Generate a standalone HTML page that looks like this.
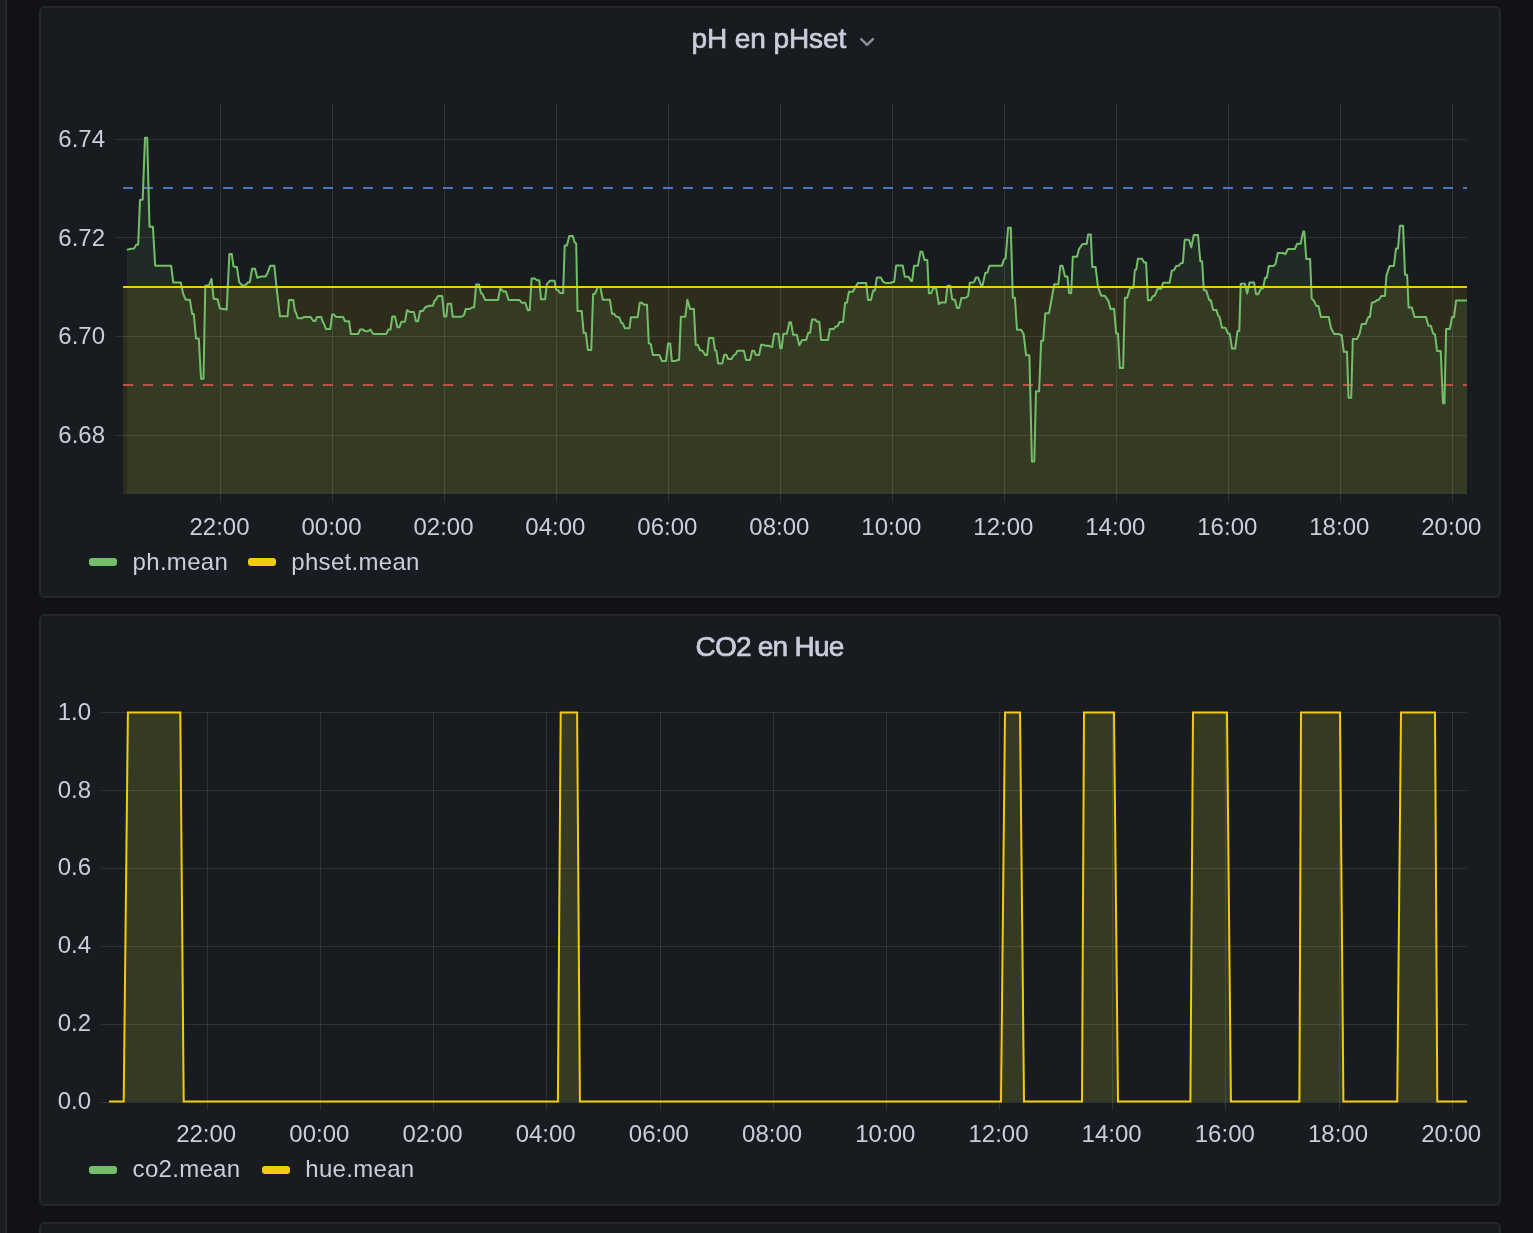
<!DOCTYPE html>
<html><head><meta charset="utf-8"><title>Grafana</title>
<style>
html,body{margin:0;padding:0;}
body{width:1533px;height:1233px;overflow:hidden;background:#111217;position:relative;font-family:"Liberation Sans",sans-serif;}
.side{position:absolute;left:0;top:0;width:5px;height:1233px;background:#181b1f;border-right:2px solid #25282d;}
.panel{position:absolute;left:39px;width:1462px;box-sizing:border-box;border:2px solid #25272c;border-radius:6px;background:#181b1f;}
</style></head><body>
<div class="side"></div>
<div class="panel" style="top:6px;height:592px"></div>
<div class="panel" style="top:614px;height:592px"></div>
<div class="panel" style="top:1222px;height:600px"></div>
<svg width="1533" height="1233" viewBox="0 0 1533 1233" style="position:absolute;left:0;top:0;will-change:transform">
<g stroke="rgba(240,250,255,0.11)" stroke-width="1" shape-rendering="crispEdges">
<line x1="115" y1="139.50" x2="1467" y2="139.50"/><line x1="115" y1="237.50" x2="1467" y2="237.50"/><line x1="115" y1="336.50" x2="1467" y2="336.50"/><line x1="115" y1="435.50" x2="1467" y2="435.50"/>
<line x1="220.5" y1="104" x2="220.5" y2="502"/><line x1="332.5" y1="104" x2="332.5" y2="502"/><line x1="444.5" y1="104" x2="444.5" y2="502"/><line x1="556.5" y1="104" x2="556.5" y2="502"/><line x1="668.5" y1="104" x2="668.5" y2="502"/><line x1="780.5" y1="104" x2="780.5" y2="502"/><line x1="892.5" y1="104" x2="892.5" y2="502"/><line x1="1004.5" y1="104" x2="1004.5" y2="502"/><line x1="1116.5" y1="104" x2="1116.5" y2="502"/><line x1="1228.5" y1="104" x2="1228.5" y2="502"/><line x1="1340.5" y1="104" x2="1340.5" y2="502"/><line x1="1452.5" y1="104" x2="1452.5" y2="502"/>
<line x1="101" y1="712.50" x2="1467" y2="712.50"/><line x1="101" y1="790.50" x2="1467" y2="790.50"/><line x1="101" y1="868.50" x2="1467" y2="868.50"/><line x1="101" y1="946.50" x2="1467" y2="946.50"/><line x1="101" y1="1024.50" x2="1467" y2="1024.50"/><line x1="101" y1="1102.50" x2="1467" y2="1102.50"/>
<line x1="207.5" y1="712" x2="207.5" y2="1110"/><line x1="320.5" y1="712" x2="320.5" y2="1110"/><line x1="433.5" y1="712" x2="433.5" y2="1110"/><line x1="546.5" y1="712" x2="546.5" y2="1110"/><line x1="660.5" y1="712" x2="660.5" y2="1110"/><line x1="773.5" y1="712" x2="773.5" y2="1110"/><line x1="886.5" y1="712" x2="886.5" y2="1110"/><line x1="999.5" y1="712" x2="999.5" y2="1110"/><line x1="1112.5" y1="712" x2="1112.5" y2="1110"/><line x1="1225.5" y1="712" x2="1225.5" y2="1110"/><line x1="1339.5" y1="712" x2="1339.5" y2="1110"/><line x1="1452.5" y1="712" x2="1452.5" y2="1110"/>
</g>
<!-- panel1 fills -->
<rect x="123" y="287" width="1344" height="207" fill="rgba(242,204,12,0.1)"/>
<polygon points="127.0,494.0 127.0,250.0 127.3,249.8 130.2,248.9 134.1,248.5 136.3,244.8 138.2,244.4 140.0,199.9 142.7,199.4 145.0,137.7 147.2,137.7 149.5,226.7 152.9,226.7 155.2,265.7 171.1,265.7 173.3,282.5 180.8,282.5 183.1,293.6 185.8,299.8 189.9,299.8 192.2,314.0 193.8,314.0 196.0,338.6 198.8,338.6 201.0,378.7 203.5,378.7 205.3,285.7 209.0,285.2 211.5,278.9 213.7,298.8 217.6,299.3 219.9,308.4 226.7,309.5 229.4,253.9 231.7,253.9 233.5,266.4 236.9,267.1 239.2,282.3 242.6,285.7 245.3,285.2 248.2,282.3 249.8,282.3 252.1,268.7 255.0,268.7 257.3,277.7 260.3,276.6 265.3,276.6 267.5,273.2 270.3,265.7 274.3,265.7 276.6,288.0 280.0,316.3 287.5,316.3 289.1,299.9 293.3,299.9 294.9,311.3 296.0,312.7 297.7,318.2 302.2,318.2 304.3,316.9 310.5,316.9 313.3,321.0 315.3,321.0 317.0,316.9 321.1,316.9 322.9,322.1 323.9,323.5 326.0,329.0 330.2,329.0 332.2,314.4 333.9,314.4 336.0,316.9 343.2,316.9 345.0,321.3 349.1,321.3 350.9,334.1 358.1,334.1 360.1,329.5 362.9,329.5 365.0,331.3 367.7,331.3 370.5,329.5 373.2,334.1 386.3,334.1 388.4,329.5 390.5,329.5 392.3,316.6 395.0,316.6 397.4,327.2 399.4,327.2 401.5,321.7 405.0,321.7 407.0,310.2 409.8,312.0 413.9,312.0 416.0,321.3 418.0,321.3 420.1,311.1 422.9,311.1 425.0,307.5 427.0,306.5 429.5,305.8 432.8,305.8 434.6,300.6 436.0,299.6 438.0,295.9 442.2,295.9 444.2,316.6 446.3,316.6 447.7,303.8 451.1,303.8 452.8,316.8 461.0,316.8 463.8,315.4 465.9,308.9 470.0,308.9 472.1,307.5 474.1,307.5 476.2,284.5 479.0,284.5 481.0,293.3 482.4,293.8 485.2,300.0 498.0,300.0 500.3,288.2 503.1,291.4 505.8,291.4 508.6,300.0 519.6,300.0 521.7,302.7 525.1,302.7 527.9,310.3 529.7,310.3 531.6,278.6 534.8,278.6 536.9,280.3 539.3,280.3 541.0,299.3 545.1,299.3 546.8,284.1 550.0,280.7 554.5,280.7 556.2,289.6 558.2,290.3 560.3,293.1 563.1,293.1 564.7,245.5 566.9,245.5 569.3,235.9 572.7,235.9 574.8,242.7 576.2,243.4 577.5,311.0 581.7,311.0 583.7,333.1 585.8,333.1 587.9,350.0 591.3,350.0 593.1,294.2 595.0,293.8 597.8,286.9 600.3,286.9 602.8,299.7 609.9,299.7 612.0,313.8 614.1,313.8 616.1,316.5 619.1,317.2 621.2,322.7 622.6,323.1 624.9,328.2 629.5,328.2 630.9,317.2 637.7,317.2 639.8,302.7 641.9,302.7 644.0,304.8 647.0,304.8 648.8,343.4 650.8,344.1 652.9,355.1 659.4,355.1 661.9,360.9 666.0,360.9 668.1,343.4 670.2,343.4 671.8,360.9 675.7,360.9 677.7,359.9 679.1,359.9 680.9,316.8 685.3,316.8 687.4,299.7 690.1,308.9 693.9,308.9 695.7,344.8 697.7,344.8 700.2,350.3 702.5,350.7 705.3,355.1 707.1,355.1 709.0,337.9 713.2,337.9 715.0,350.3 716.3,350.7 718.1,363.4 722.3,363.4 724.2,354.8 726.4,354.8 728.1,359.0 731.5,359.0 733.6,355.4 735.6,354.4 737.4,350.7 743.9,350.7 746.0,359.9 750.1,359.9 752.2,350.7 754.0,350.7 755.9,355.1 759.1,355.1 761.1,344.8 763.6,344.8 765.3,345.7 768.7,345.7 770.8,346.8 772.2,346.8 774.2,333.7 778.4,333.7 780.2,348.2 781.7,348.2 783.4,333.7 786.9,333.7 789.4,322.3 791.0,322.3 793.1,334.7 796.8,334.7 799.3,345.2 802.1,340.0 806.2,340.0 808.3,332.8 810.1,332.8 812.0,319.5 815.2,319.5 817.2,321.8 819.3,321.8 821.1,340.0 828.0,340.0 829.9,328.9 833.8,328.9 835.8,326.4 837.6,326.2 839.6,322.0 843.1,322.0 845.1,302.7 846.9,302.7 848.9,291.7 852.8,291.7 855.1,287.6 857.9,283.1 866.2,283.1 868.0,300.0 871.0,300.0 873.1,290.6 874.9,290.6 876.8,277.6 880.9,277.6 883.1,281.8 886.2,283.1 890.3,283.1 892.4,282.0 894.2,282.0 896.1,265.5 902.7,265.5 904.8,276.8 908.5,276.8 911.0,280.9 912.1,280.9 914.0,265.8 917.9,265.8 920.4,251.7 922.3,251.7 924.5,260.0 927.3,260.0 928.9,293.3 931.0,293.3 933.3,288.2 936.1,288.2 938.8,304.1 941.3,302.4 945.7,302.4 947.5,285.7 950.2,285.7 952.2,299.4 954.9,299.8 957.0,308.1 959.1,308.1 961.5,298.1 965.7,297.7 968.2,295.7 969.8,282.8 974.0,282.2 976.0,277.5 978.1,277.5 981.2,285.3 982.6,285.3 985.3,272.9 987.4,272.5 989.5,265.7 1001.9,265.7 1003.9,259.5 1005.6,258.4 1008.1,227.8 1010.8,227.8 1012.8,297.7 1014.9,297.7 1017.0,329.8 1021.1,329.8 1023.6,333.9 1026.1,355.2 1029.4,355.2 1031.9,461.5 1034.3,461.5 1036.0,391.2 1039.1,391.2 1041.2,340.7 1043.2,340.7 1045.3,313.2 1049.0,313.2 1051.5,299.8 1054.2,284.3 1058.3,284.3 1060.4,265.7 1062.5,265.7 1065.0,276.6 1067.4,276.6 1069.1,293.2 1071.2,293.2 1072.8,256.8 1077.0,256.8 1079.0,249.1 1082.5,244.0 1086.7,244.0 1088.1,234.6 1090.8,234.6 1092.3,267.1 1095.6,267.1 1098.0,287.0 1101.2,295.7 1104.7,295.7 1108.4,300.8 1110.5,309.1 1114.1,308.8 1116.2,333.6 1118.0,333.6 1119.9,368.0 1123.1,368.0 1124.9,297.7 1127.2,297.7 1130.0,288.1 1133.4,288.1 1134.8,270.1 1136.2,269.5 1137.9,258.8 1142.0,258.8 1144.2,262.6 1146.1,262.6 1147.9,300.2 1150.7,300.2 1152.7,296.3 1154.8,295.7 1157.6,288.8 1161.3,288.8 1163.1,282.8 1169.6,282.8 1171.8,270.8 1174.1,270.1 1176.2,266.0 1178.9,265.7 1181.0,263.0 1182.8,263.0 1184.7,239.8 1188.9,239.8 1191.3,247.4 1193.8,235.0 1198.0,235.0 1200.3,261.2 1202.1,261.2 1203.8,290.1 1206.2,290.6 1209.3,300.2 1210.9,300.2 1213.1,309.9 1216.4,309.9 1218.2,315.6 1219.6,317.0 1222.0,327.8 1225.5,327.8 1227.9,333.3 1229.7,333.8 1232.0,348.5 1235.2,348.5 1237.5,331.1 1239.3,331.1 1240.7,283.7 1244.8,283.7 1247.2,293.6 1249.5,282.6 1254.1,282.6 1256.1,294.3 1258.2,294.3 1261.0,288.4 1263.0,288.4 1265.1,277.7 1266.9,277.7 1268.8,266.0 1273.4,266.0 1275.5,264.0 1277.8,253.0 1282.9,253.0 1285.3,254.2 1288.0,249.0 1294.8,249.0 1297.1,243.8 1300.6,243.8 1303.2,231.6 1304.3,231.6 1306.3,259.0 1310.1,259.0 1311.7,298.8 1313.7,300.4 1316.4,305.9 1318.5,305.9 1320.9,317.0 1328.8,317.0 1331.1,328.6 1334.3,333.9 1338.3,333.9 1341.7,335.2 1343.8,351.8 1347.0,351.8 1348.5,397.7 1351.2,397.7 1352.8,339.1 1356.9,339.1 1359.6,333.9 1361.7,324.1 1365.5,324.1 1368.3,317.0 1369.9,317.0 1371.8,302.8 1375.0,301.7 1377.0,300.1 1378.6,300.1 1381.3,296.0 1384.9,296.0 1386.5,275.1 1389.7,265.9 1393.9,265.9 1396.0,248.5 1398.0,248.5 1399.9,225.8 1403.1,225.8 1405.0,274.8 1407.1,274.8 1408.6,307.5 1411.8,307.5 1414.5,317.0 1426.0,317.0 1428.4,325.7 1430.8,325.7 1433.2,333.6 1435.0,334.4 1437.1,351.0 1440.7,351.0 1443.0,403.2 1444.5,403.2 1446.1,328.9 1449.8,328.9 1452.1,317.0 1454.0,317.0 1456.1,300.4 1467.0,300.4 1467.0,494.0" fill="rgba(115,191,105,0.1)"/>
<line x1="123" y1="188" x2="1467" y2="188" stroke="#4b79be" stroke-width="2" stroke-dasharray="10 10"/>
<line x1="123" y1="385" x2="1467" y2="385" stroke="#b85445" stroke-width="2" stroke-dasharray="10 10"/>
<polyline points="127.0,250.0 127.3,249.8 130.2,248.9 134.1,248.5 136.3,244.8 138.2,244.4 140.0,199.9 142.7,199.4 145.0,137.7 147.2,137.7 149.5,226.7 152.9,226.7 155.2,265.7 171.1,265.7 173.3,282.5 180.8,282.5 183.1,293.6 185.8,299.8 189.9,299.8 192.2,314.0 193.8,314.0 196.0,338.6 198.8,338.6 201.0,378.7 203.5,378.7 205.3,285.7 209.0,285.2 211.5,278.9 213.7,298.8 217.6,299.3 219.9,308.4 226.7,309.5 229.4,253.9 231.7,253.9 233.5,266.4 236.9,267.1 239.2,282.3 242.6,285.7 245.3,285.2 248.2,282.3 249.8,282.3 252.1,268.7 255.0,268.7 257.3,277.7 260.3,276.6 265.3,276.6 267.5,273.2 270.3,265.7 274.3,265.7 276.6,288.0 280.0,316.3 287.5,316.3 289.1,299.9 293.3,299.9 294.9,311.3 296.0,312.7 297.7,318.2 302.2,318.2 304.3,316.9 310.5,316.9 313.3,321.0 315.3,321.0 317.0,316.9 321.1,316.9 322.9,322.1 323.9,323.5 326.0,329.0 330.2,329.0 332.2,314.4 333.9,314.4 336.0,316.9 343.2,316.9 345.0,321.3 349.1,321.3 350.9,334.1 358.1,334.1 360.1,329.5 362.9,329.5 365.0,331.3 367.7,331.3 370.5,329.5 373.2,334.1 386.3,334.1 388.4,329.5 390.5,329.5 392.3,316.6 395.0,316.6 397.4,327.2 399.4,327.2 401.5,321.7 405.0,321.7 407.0,310.2 409.8,312.0 413.9,312.0 416.0,321.3 418.0,321.3 420.1,311.1 422.9,311.1 425.0,307.5 427.0,306.5 429.5,305.8 432.8,305.8 434.6,300.6 436.0,299.6 438.0,295.9 442.2,295.9 444.2,316.6 446.3,316.6 447.7,303.8 451.1,303.8 452.8,316.8 461.0,316.8 463.8,315.4 465.9,308.9 470.0,308.9 472.1,307.5 474.1,307.5 476.2,284.5 479.0,284.5 481.0,293.3 482.4,293.8 485.2,300.0 498.0,300.0 500.3,288.2 503.1,291.4 505.8,291.4 508.6,300.0 519.6,300.0 521.7,302.7 525.1,302.7 527.9,310.3 529.7,310.3 531.6,278.6 534.8,278.6 536.9,280.3 539.3,280.3 541.0,299.3 545.1,299.3 546.8,284.1 550.0,280.7 554.5,280.7 556.2,289.6 558.2,290.3 560.3,293.1 563.1,293.1 564.7,245.5 566.9,245.5 569.3,235.9 572.7,235.9 574.8,242.7 576.2,243.4 577.5,311.0 581.7,311.0 583.7,333.1 585.8,333.1 587.9,350.0 591.3,350.0 593.1,294.2 595.0,293.8 597.8,286.9 600.3,286.9 602.8,299.7 609.9,299.7 612.0,313.8 614.1,313.8 616.1,316.5 619.1,317.2 621.2,322.7 622.6,323.1 624.9,328.2 629.5,328.2 630.9,317.2 637.7,317.2 639.8,302.7 641.9,302.7 644.0,304.8 647.0,304.8 648.8,343.4 650.8,344.1 652.9,355.1 659.4,355.1 661.9,360.9 666.0,360.9 668.1,343.4 670.2,343.4 671.8,360.9 675.7,360.9 677.7,359.9 679.1,359.9 680.9,316.8 685.3,316.8 687.4,299.7 690.1,308.9 693.9,308.9 695.7,344.8 697.7,344.8 700.2,350.3 702.5,350.7 705.3,355.1 707.1,355.1 709.0,337.9 713.2,337.9 715.0,350.3 716.3,350.7 718.1,363.4 722.3,363.4 724.2,354.8 726.4,354.8 728.1,359.0 731.5,359.0 733.6,355.4 735.6,354.4 737.4,350.7 743.9,350.7 746.0,359.9 750.1,359.9 752.2,350.7 754.0,350.7 755.9,355.1 759.1,355.1 761.1,344.8 763.6,344.8 765.3,345.7 768.7,345.7 770.8,346.8 772.2,346.8 774.2,333.7 778.4,333.7 780.2,348.2 781.7,348.2 783.4,333.7 786.9,333.7 789.4,322.3 791.0,322.3 793.1,334.7 796.8,334.7 799.3,345.2 802.1,340.0 806.2,340.0 808.3,332.8 810.1,332.8 812.0,319.5 815.2,319.5 817.2,321.8 819.3,321.8 821.1,340.0 828.0,340.0 829.9,328.9 833.8,328.9 835.8,326.4 837.6,326.2 839.6,322.0 843.1,322.0 845.1,302.7 846.9,302.7 848.9,291.7 852.8,291.7 855.1,287.6 857.9,283.1 866.2,283.1 868.0,300.0 871.0,300.0 873.1,290.6 874.9,290.6 876.8,277.6 880.9,277.6 883.1,281.8 886.2,283.1 890.3,283.1 892.4,282.0 894.2,282.0 896.1,265.5 902.7,265.5 904.8,276.8 908.5,276.8 911.0,280.9 912.1,280.9 914.0,265.8 917.9,265.8 920.4,251.7 922.3,251.7 924.5,260.0 927.3,260.0 928.9,293.3 931.0,293.3 933.3,288.2 936.1,288.2 938.8,304.1 941.3,302.4 945.7,302.4 947.5,285.7 950.2,285.7 952.2,299.4 954.9,299.8 957.0,308.1 959.1,308.1 961.5,298.1 965.7,297.7 968.2,295.7 969.8,282.8 974.0,282.2 976.0,277.5 978.1,277.5 981.2,285.3 982.6,285.3 985.3,272.9 987.4,272.5 989.5,265.7 1001.9,265.7 1003.9,259.5 1005.6,258.4 1008.1,227.8 1010.8,227.8 1012.8,297.7 1014.9,297.7 1017.0,329.8 1021.1,329.8 1023.6,333.9 1026.1,355.2 1029.4,355.2 1031.9,461.5 1034.3,461.5 1036.0,391.2 1039.1,391.2 1041.2,340.7 1043.2,340.7 1045.3,313.2 1049.0,313.2 1051.5,299.8 1054.2,284.3 1058.3,284.3 1060.4,265.7 1062.5,265.7 1065.0,276.6 1067.4,276.6 1069.1,293.2 1071.2,293.2 1072.8,256.8 1077.0,256.8 1079.0,249.1 1082.5,244.0 1086.7,244.0 1088.1,234.6 1090.8,234.6 1092.3,267.1 1095.6,267.1 1098.0,287.0 1101.2,295.7 1104.7,295.7 1108.4,300.8 1110.5,309.1 1114.1,308.8 1116.2,333.6 1118.0,333.6 1119.9,368.0 1123.1,368.0 1124.9,297.7 1127.2,297.7 1130.0,288.1 1133.4,288.1 1134.8,270.1 1136.2,269.5 1137.9,258.8 1142.0,258.8 1144.2,262.6 1146.1,262.6 1147.9,300.2 1150.7,300.2 1152.7,296.3 1154.8,295.7 1157.6,288.8 1161.3,288.8 1163.1,282.8 1169.6,282.8 1171.8,270.8 1174.1,270.1 1176.2,266.0 1178.9,265.7 1181.0,263.0 1182.8,263.0 1184.7,239.8 1188.9,239.8 1191.3,247.4 1193.8,235.0 1198.0,235.0 1200.3,261.2 1202.1,261.2 1203.8,290.1 1206.2,290.6 1209.3,300.2 1210.9,300.2 1213.1,309.9 1216.4,309.9 1218.2,315.6 1219.6,317.0 1222.0,327.8 1225.5,327.8 1227.9,333.3 1229.7,333.8 1232.0,348.5 1235.2,348.5 1237.5,331.1 1239.3,331.1 1240.7,283.7 1244.8,283.7 1247.2,293.6 1249.5,282.6 1254.1,282.6 1256.1,294.3 1258.2,294.3 1261.0,288.4 1263.0,288.4 1265.1,277.7 1266.9,277.7 1268.8,266.0 1273.4,266.0 1275.5,264.0 1277.8,253.0 1282.9,253.0 1285.3,254.2 1288.0,249.0 1294.8,249.0 1297.1,243.8 1300.6,243.8 1303.2,231.6 1304.3,231.6 1306.3,259.0 1310.1,259.0 1311.7,298.8 1313.7,300.4 1316.4,305.9 1318.5,305.9 1320.9,317.0 1328.8,317.0 1331.1,328.6 1334.3,333.9 1338.3,333.9 1341.7,335.2 1343.8,351.8 1347.0,351.8 1348.5,397.7 1351.2,397.7 1352.8,339.1 1356.9,339.1 1359.6,333.9 1361.7,324.1 1365.5,324.1 1368.3,317.0 1369.9,317.0 1371.8,302.8 1375.0,301.7 1377.0,300.1 1378.6,300.1 1381.3,296.0 1384.9,296.0 1386.5,275.1 1389.7,265.9 1393.9,265.9 1396.0,248.5 1398.0,248.5 1399.9,225.8 1403.1,225.8 1405.0,274.8 1407.1,274.8 1408.6,307.5 1411.8,307.5 1414.5,317.0 1426.0,317.0 1428.4,325.7 1430.8,325.7 1433.2,333.6 1435.0,334.4 1437.1,351.0 1440.7,351.0 1443.0,403.2 1444.5,403.2 1446.1,328.9 1449.8,328.9 1452.1,317.0 1454.0,317.0 1456.1,300.4 1467.0,300.4" fill="none" stroke="#73bf69" stroke-width="2" stroke-linejoin="round"/>
<line x1="123" y1="287" x2="1467" y2="287" stroke="#f2cc0c" stroke-width="2"/>
<!-- panel2 -->
<polygon points="109.0,1101.5 123.7,1101.5 127.9,712.5 180.3,712.5 183.7,1101.5 557.9,1101.5 560.7,712.5 577.1,712.5 579.9,1101.5 1001.0,1101.5 1005.0,712.5 1020.0,712.5 1024.0,1101.5 1082.0,1101.5 1084.0,712.5 1114.0,712.5 1118.0,1101.5 1190.4,1101.5 1193.0,712.5 1227.0,712.5 1230.9,1101.5 1299.4,1101.5 1301.0,712.5 1340.0,712.5 1343.4,1101.5 1397.2,1101.5 1401.0,712.5 1435.0,712.5 1437.3,1101.5 1467.0,1101.5 1467.0,1102.0 109.0,1102.0" fill="rgba(242,204,12,0.1)"/>
<polygon points="109.0,1101.5 123.7,1101.5 127.9,712.5 180.3,712.5 183.7,1101.5 557.9,1101.5 560.7,712.5 577.1,712.5 579.9,1101.5 1001.0,1101.5 1005.0,712.5 1020.0,712.5 1024.0,1101.5 1082.0,1101.5 1084.0,712.5 1114.0,712.5 1118.0,1101.5 1190.4,1101.5 1193.0,712.5 1227.0,712.5 1230.9,1101.5 1299.4,1101.5 1301.0,712.5 1340.0,712.5 1343.4,1101.5 1397.2,1101.5 1401.0,712.5 1435.0,712.5 1437.3,1101.5 1467.0,1101.5 1467.0,1102.0 109.0,1102.0" fill="rgba(115,191,105,0.1)"/>
<polyline points="109.0,1101.5 123.7,1101.5 127.9,712.5 180.3,712.5 183.7,1101.5 557.9,1101.5 560.7,712.5 577.1,712.5 579.9,1101.5 1001.0,1101.5 1005.0,712.5 1020.0,712.5 1024.0,1101.5 1082.0,1101.5 1084.0,712.5 1114.0,712.5 1118.0,1101.5 1190.4,1101.5 1193.0,712.5 1227.0,712.5 1230.9,1101.5 1299.4,1101.5 1301.0,712.5 1340.0,712.5 1343.4,1101.5 1397.2,1101.5 1401.0,712.5 1435.0,712.5 1437.3,1101.5 1467.0,1101.5" fill="none" stroke="#f2cc0c" stroke-width="2" stroke-linejoin="miter"/>
<g font-family="Liberation Sans, sans-serif" font-size="24" fill="#ccccdc">
<g text-anchor="end">
<text x="105" y="146.8">6.74</text>
<text x="105" y="245.5">6.72</text>
<text x="105" y="344.1">6.70</text>
<text x="105" y="442.8">6.68</text>
<text x="91" y="719.8">1.0</text>
<text x="91" y="797.6">0.8</text>
<text x="91" y="875.4">0.6</text>
<text x="91" y="953.2">0.4</text>
<text x="91" y="1031">0.2</text>
<text x="91" y="1108.8">0.0</text>
</g>
<g text-anchor="middle">
<text x="219.5" y="534.7">22:00</text><text x="331.5" y="534.7">00:00</text><text x="443.5" y="534.7">02:00</text><text x="555.4" y="534.7">04:00</text><text x="667.4" y="534.7">06:00</text><text x="779.4" y="534.7">08:00</text><text x="891.4" y="534.7">10:00</text><text x="1003.4" y="534.7">12:00</text><text x="1115.3" y="534.7">14:00</text><text x="1227.3" y="534.7">16:00</text><text x="1339.3" y="534.7">18:00</text><text x="1451.3" y="534.7">20:00</text>
<text x="206.2" y="1142.3">22:00</text><text x="319.4" y="1142.3">00:00</text><text x="432.6" y="1142.3">02:00</text><text x="545.7" y="1142.3">04:00</text><text x="658.9" y="1142.3">06:00</text><text x="772.1" y="1142.3">08:00</text><text x="885.3" y="1142.3">10:00</text><text x="998.5" y="1142.3">12:00</text><text x="1111.6" y="1142.3">14:00</text><text x="1224.8" y="1142.3">16:00</text><text x="1338.0" y="1142.3">18:00</text><text x="1451.2" y="1142.3">20:00</text>
</g>
<g letter-spacing="0.3">
<text x="132.6" y="569.7">ph.mean</text>
<text x="291.3" y="569.7">phset.mean</text>
<text x="132.6" y="1177.3">co2.mean</text>
<text x="305.3" y="1177.3">hue.mean</text>
</g>
</g>
<rect x="89" y="558" width="28" height="8" rx="3" fill="#73bf69"/>
<rect x="248" y="558" width="28" height="8" rx="3" fill="#f2cc0c"/>
<rect x="89" y="1166" width="28" height="8" rx="3" fill="#73bf69"/>
<rect x="262" y="1166" width="28" height="8" rx="3" fill="#f2cc0c"/>
<g font-family="Liberation Sans, sans-serif" font-size="28" fill="#ccccdc" stroke="#ccccdc" stroke-width="0.7" text-anchor="middle">
<text x="768.8" y="48" letter-spacing="-0.1">pH en pHset</text>
<text x="769.5" y="656" letter-spacing="-0.75">CO2 en Hue</text>
</g>
<path d="M861.2 39.2 L867 44.8 L872.9 39.2" fill="none" stroke="#8e8e9a" stroke-width="2.5" stroke-linecap="round" stroke-linejoin="round"/>
</svg>
</body></html>
